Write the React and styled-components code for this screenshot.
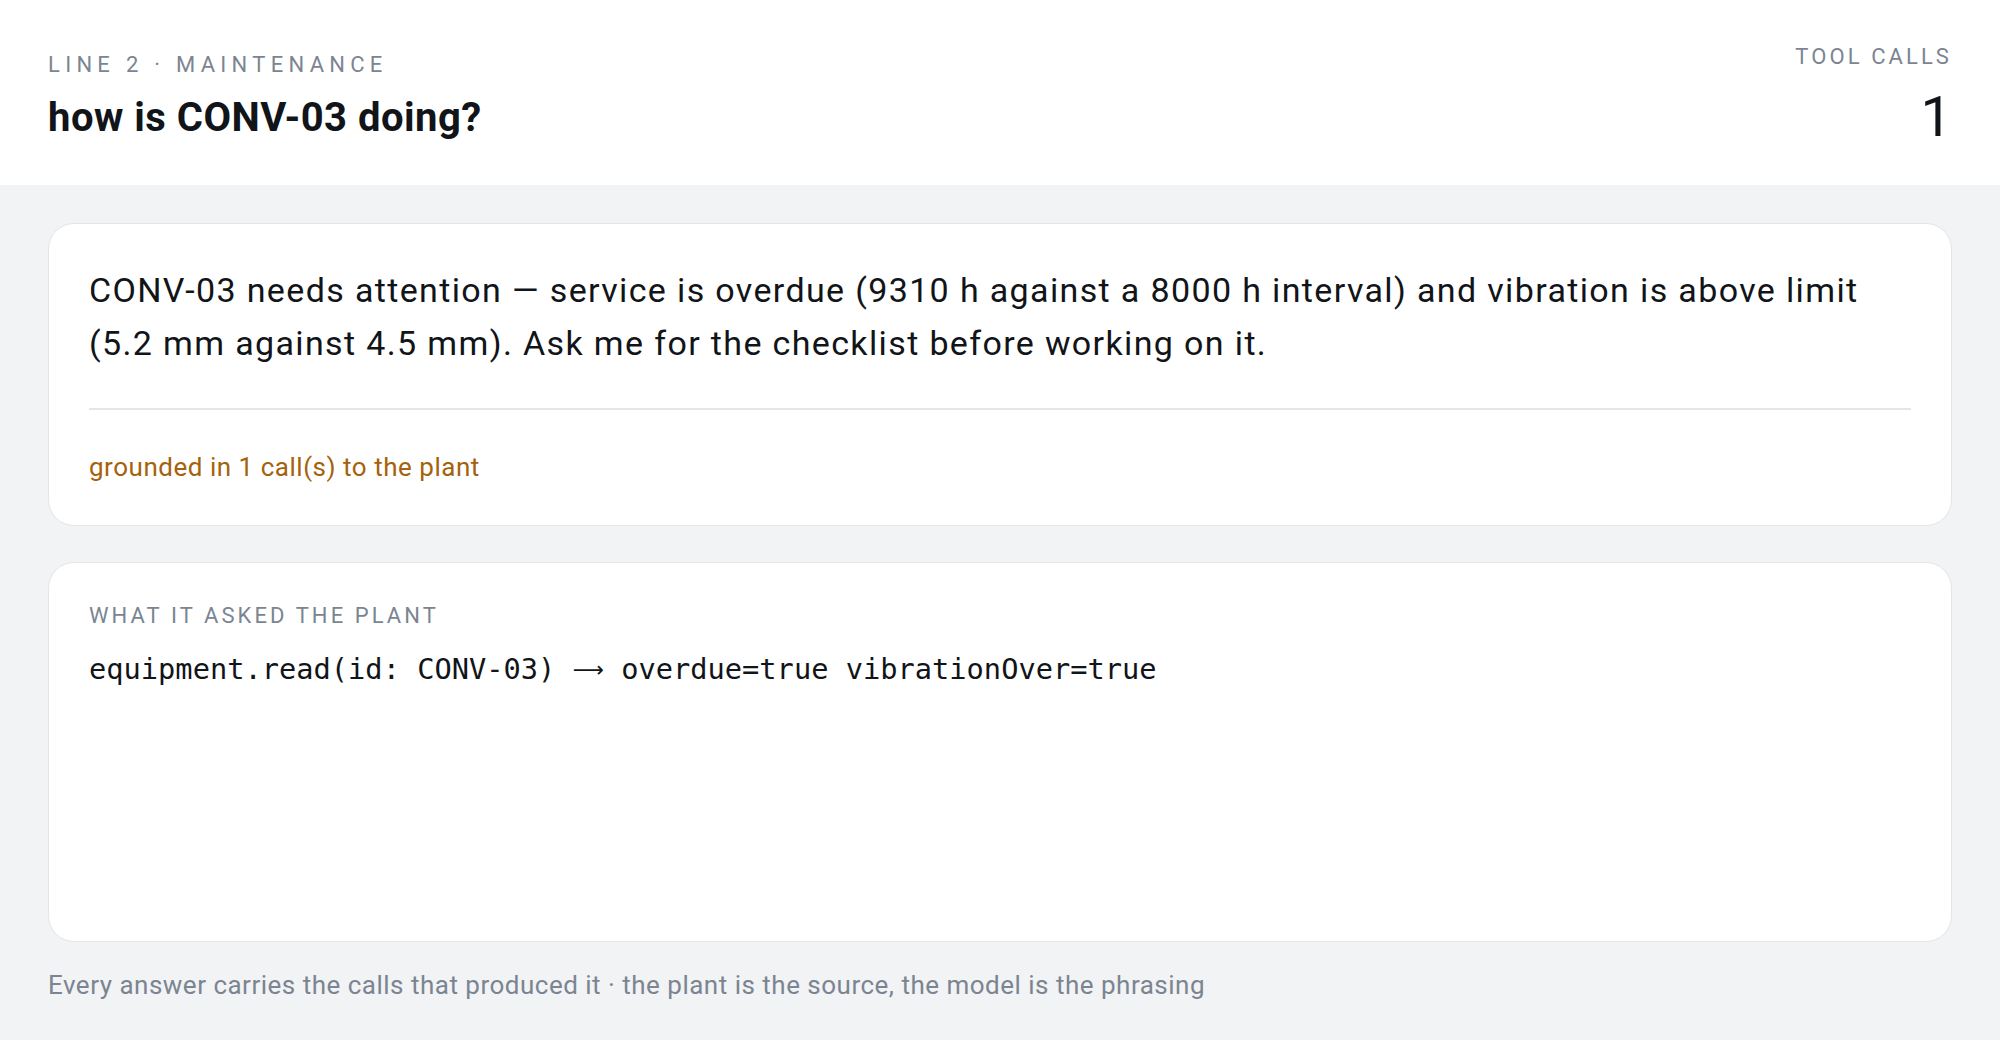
import styled, { createGlobalStyle } from 'styled-components';

const GlobalStyle = createGlobalStyle`
  html, body {
    margin: 0;
    padding: 0;
    height: 100%;
  }
  body {
    background: #f2f3f5;
    font-family: Roboto, "Liberation Sans", Arial, sans-serif;
    color: #111418;
  }
  #root {
    height: 100%;
  }
`;

const Page = styled.div`
  height: 100vh;
  display: flex;
  flex-direction: column;
  box-sizing: border-box;
`;

const Header = styled.header`
  height: 185px;
  box-sizing: border-box;
  padding: 8px 48px 0;
  background: #ffffff;
  display: flex;
  align-items: center;
  justify-content: space-between;
  flex-shrink: 0;
`;

const HeaderBlock = styled.div`
  display: flex;
  flex-direction: column;
  align-items: ${props => (props.right ? 'flex-end' : 'flex-start')};
`;

const Eyebrow = styled.div`
  font-size: 22px;
  line-height: normal;
  letter-spacing: ${props => props.spacing || '0.2em'};
  text-transform: uppercase;
  color: #7b8591;
  margin-bottom: ${props => props.gap || '0'};
`;

const Question = styled.h1`
  margin: 0;
  font-size: 40px;
  font-weight: 700;
  line-height: normal;
  letter-spacing: 0.012em;
  color: #111418;
`;

const CallCount = styled.div`
  font-size: 56px;
  font-weight: 400;
  line-height: normal;
  color: #111418;
`;

const Main = styled.main`
  flex: 1;
  display: flex;
  flex-direction: column;
  padding: 38px 48px 40px;
  min-height: 0;
`;

const Card = styled.section`
  background: #ffffff;
  border: 1px solid #e3e5e9;
  border-radius: 26px;
  padding: 40px 40px ${props => props.bottom || '40px'};
  display: flex;
  flex-direction: column;
  flex: ${props => (props.grow ? 1 : 'none')};
  margin-bottom: ${props => props.gap || '0'};
`;

const Answer = styled.p`
  margin: 0;
  font-size: 34px;
  line-height: 52.8px;
  letter-spacing: 0.04em;
  color: #111418;
`;

const Divider = styled.hr`
  border: none;
  height: 2px;
  background: #e3e5e9;
  margin: 38px 0 38px;
`;

const Grounding = styled.div`
  font-size: 26px;
  line-height: 1.5;
  letter-spacing: 0.02em;
  color: #a5620c;
`;

const CallLine = styled.code`
  display: block;
  margin-top: 24px;
  font-family: "DejaVu Sans Mono", "Liberation Mono", monospace;
  font-size: 28.7px;
  line-height: normal;
  color: #111418;
  white-space: pre;
`;

const Arrow = styled.span`
  font-family: "DejaVu Sans", sans-serif;
  font-size: 0.76em;
  vertical-align: 2px;
`;

const Footnote = styled.footer`
  font-size: 26px;
  line-height: normal;
  letter-spacing: 0.019em;
  color: #7b8591;
  flex-shrink: 0;
  padding: 0 48px;
  margin-top: -12px;
  margin-bottom: 40px;
`;

const App = () => {
  const calls = [
    { fn: 'equipment.read', args: 'id: CONV-03', result: 'overdue=true vibrationOver=true' },
  ];

  return (
    <>
      <GlobalStyle />
      <Page>
        <Header>
          <HeaderBlock>
            <Eyebrow spacing="0.24em" gap="17px">Line 2 · Maintenance</Eyebrow>
            <Question>how is CONV-03 doing?</Question>
          </HeaderBlock>
          <HeaderBlock right>
            <Eyebrow spacing="0.14em" gap="15px">Tool calls</Eyebrow>
            <CallCount>{calls.length}</CallCount>
          </HeaderBlock>
        </Header>

        <Main>
          <Card gap="36px" bottom="38px">
            <Answer>
              CONV-03 needs attention — service is overdue (9310 h against a 8000 h interval) and
              vibration is above limit (5.2 mm against 4.5 mm). Ask me for the checklist before
              working on it.
            </Answer>
            <Divider />
            <Grounding>grounded in {calls.length} call(s) to the plant</Grounding>
          </Card>

          <Card grow>
            <Eyebrow spacing="0.14em">What it asked the plant</Eyebrow>
            {calls.map((call, index) => (
              <CallLine key={index}>
                {call.fn}({call.args}) <Arrow>⟶</Arrow> {call.result}
              </CallLine>
            ))}
          </Card>
        </Main>

        <Footnote>
          Every answer carries the calls that produced it · the plant is the source, the model is the phrasing
        </Footnote>
      </Page>
    </>
  );
};

export default App;
